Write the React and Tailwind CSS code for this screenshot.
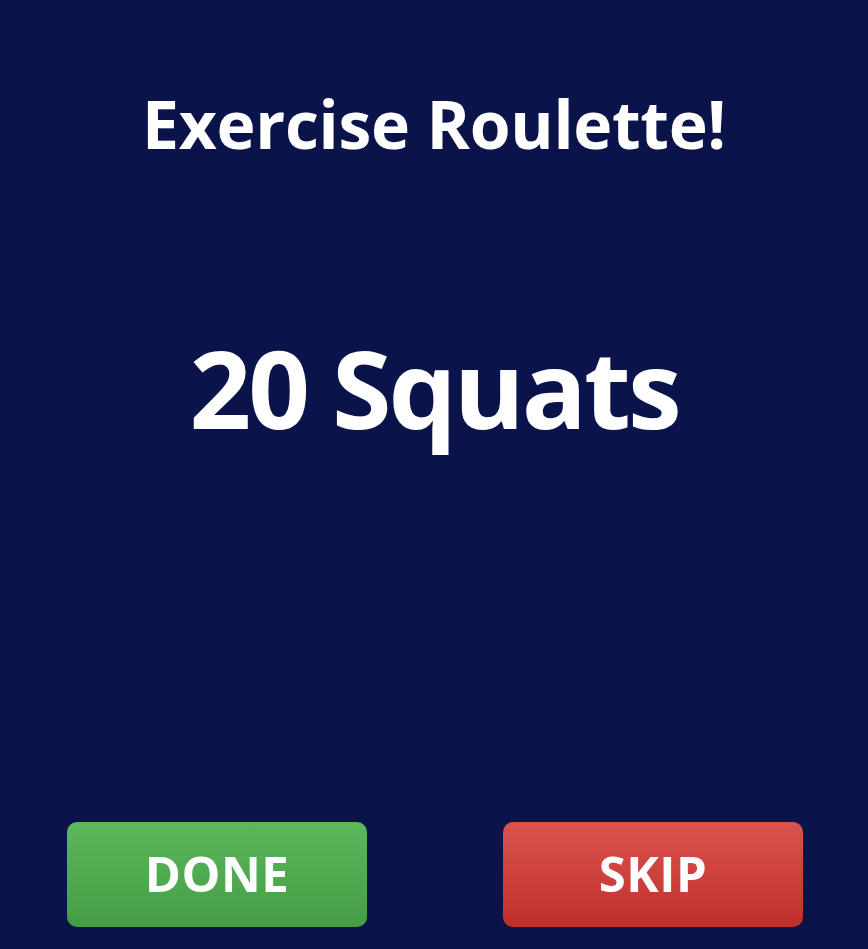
import React from "react";

const font = { fontFamily: '"Open Sans", "Noto Sans", sans-serif' };

const App = () => {
  return (
    <div
      className="flex h-[949px] w-full flex-col items-center bg-[#0b134b] text-white"
      style={font}
    >
      <h1 className="mt-[83px] text-[66px] font-bold leading-[80px] tracking-[-0.3px]">
        Exercise Roulette!
      </h1>
      <p className="mt-[160px] text-[108px] font-bold leading-[130px] tracking-[-3px]">
        20 Squats
      </p>
      <div className="mt-auto flex w-full justify-between pb-[22px] pl-[67px] pr-[65px]">
        <button className="flex h-[105px] w-[300px] items-center justify-center rounded-[10px] bg-gradient-to-b from-[#5cb85c] to-[#449d44] pb-[2px] text-[49px] font-bold tracking-[0.5px] text-white">
          DONE
        </button>
        <button className="flex h-[105px] w-[300px] items-center justify-center rounded-[10px] bg-gradient-to-b from-[#d9534f] to-[#c12e2a] pb-[2px] text-[49px] font-bold tracking-[0.5px] text-white">
          SKIP
        </button>
      </div>
    </div>
  );
};

export default App;
